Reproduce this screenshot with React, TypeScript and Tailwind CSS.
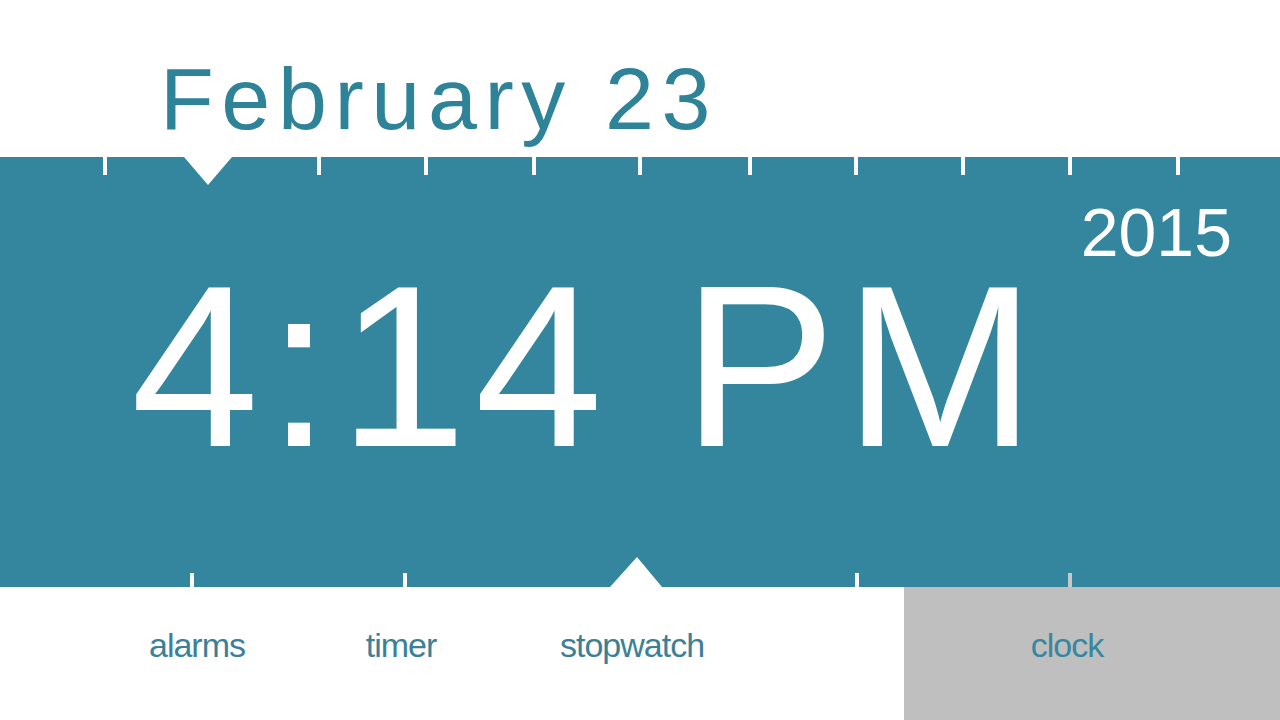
const TOP_TICKS = [105, 319, 426, 534, 640, 750, 856, 963, 1070, 1178]
const BOTTOM_TICKS = [
  { x: 192, gray: false },
  { x: 405, gray: false },
  { x: 857, gray: false },
  { x: 1070, gray: true },
]

const font = { fontFamily: '"Liberation Sans", Arial, sans-serif' }

export default function App() {
  return (
    <div className="w-[1280px] h-[720px] bg-white flex flex-col overflow-hidden" style={font}>
      {/* Date header */}
      <header className="h-[157px] pt-[55px] pl-[160px]">
        <h1 className="text-[88px] leading-none tracking-[7.6px] text-[#2f8399]">February 23</h1>
      </header>

      {/* Clock band */}
      <section className="relative h-[430px] bg-[#33869d] flex flex-col">
        {TOP_TICKS.map((x) => (
          <span key={x} className="absolute top-0 w-[4px] h-[18px] bg-white" style={{ left: x - 2 }} />
        ))}
        <svg className="absolute top-0 left-[184px]" width="48" height="28" viewBox="0 0 48 28">
          <polygon points="0,0 48,0 24,28" fill="#fff" />
        </svg>

        <div className="self-end pr-[48px] pt-[41px] text-[68px] leading-none text-white">2015</div>
        <div className="-mt-[14px] pl-[131px] text-[230px] leading-none tracking-[8px] text-white whitespace-nowrap">
          4:14 PM
        </div>

        {BOTTOM_TICKS.map((t) => (
          <span
            key={t.x}
            className={`absolute bottom-0 w-[4px] h-[14px] ${t.gray ? 'bg-[#c4c9cb]' : 'bg-white'}`}
            style={{ left: t.x - 2 }}
          />
        ))}
        <svg className="absolute bottom-0 left-[610px]" width="52" height="30" viewBox="0 0 52 30">
          <polygon points="0,30 52,30 27,0" fill="#fff" />
        </svg>
      </section>

      {/* Navigation */}
      <nav className="flex-1 flex pl-[97px] text-[34px] leading-none tracking-[-1px] text-[#3a8197]">
        <NavItem label="alarms" />
        <NavItem label="timer" className="ml-[4px]" />
        <NavItem label="stopwatch" className="ml-[31px]" />
        <div className="flex-1" />
        <div className="w-[376px] bg-[#bfbfbf] flex justify-center pr-[50px] pt-[41px] text-[#3886a0]">
          clock
        </div>
      </nav>
    </div>
  )
}

function NavItem({ label, className = '' }: { label: string; className?: string }) {
  return <div className={`w-[200px] flex justify-center pt-[41px] ${className}`}>{label}</div>
}
